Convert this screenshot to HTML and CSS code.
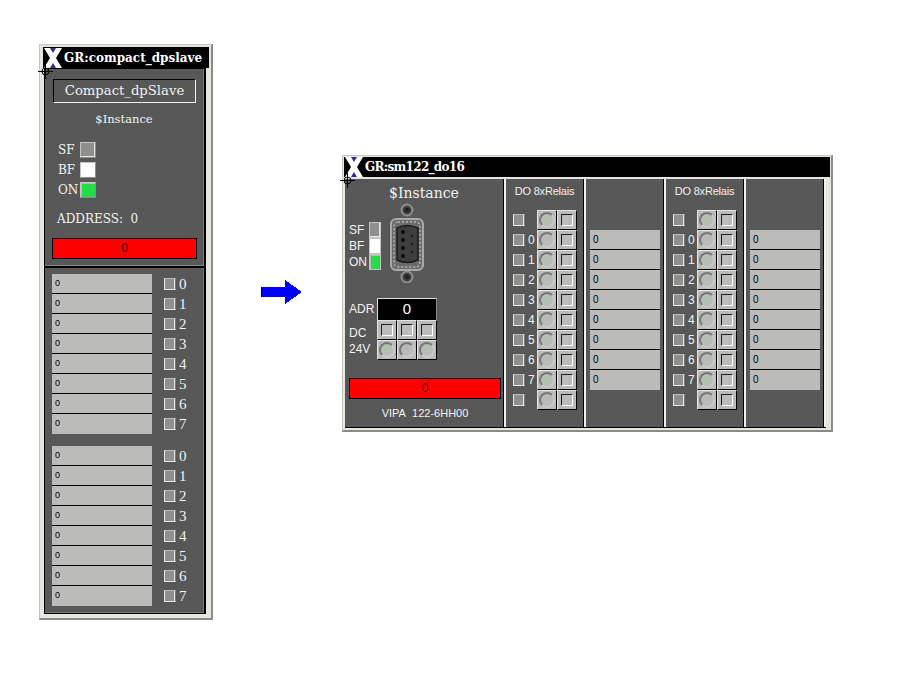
FILE: index.html
```html
<!DOCTYPE html>
<html>
<head>
    <meta charset="UTF-8">
    <title>Graphs</title>
    <link rel="stylesheet" href="styles.css">
</head>
<body>
    <div class="desktop">

        <!-- left window -->
        <div class="win slaveWin">
            <div class="titlebar">
                <svg class="xlogo" viewBox="0 0 18 20"><rect width="18" height="20" fill="#000"/><polygon points="3,0 16,0 9,9" fill="#3a2a8c"/><polygon points="3,20 16,20 9,11" fill="#3a2a8c"/><polygon points="0,0 6,0 18,20 12,20" fill="#fff"/><polygon points="12,0 18,0 6,20 0,20" fill="#fff"/></svg>
                <span class="titleText">GR:compact_dpslave</span>
            </div>
            <div class="slaveBody">
                <div class="pane slaveTop">
                    <div class="nameBox">Compact_dpSlave</div>
                    <div class="instance">$Instance</div>
                    <div class="ledRow"><span class="ledName">SF</span><span class="led ledGrey"></span></div>
                    <div class="ledRow"><span class="ledName">BF</span><span class="led ledWhite"></span></div>
                    <div class="ledRow"><span class="ledName">ON</span><span class="led ledGreen"></span></div>
                    <div class="address">ADDRESS:&nbsp; 0</div>
                    <div class="redBar">0</div>
                </div>
                <div class="pane slaveIo">
                    <div class="ioGroup">
                        <div class="ioRow"><div class="cell">0</div><span class="chk"></span><span class="digit">0</span></div>
                        <div class="ioRow"><div class="cell">0</div><span class="chk"></span><span class="digit">1</span></div>
                        <div class="ioRow"><div class="cell">0</div><span class="chk"></span><span class="digit">2</span></div>
                        <div class="ioRow"><div class="cell">0</div><span class="chk"></span><span class="digit">3</span></div>
                        <div class="ioRow"><div class="cell">0</div><span class="chk"></span><span class="digit">4</span></div>
                        <div class="ioRow"><div class="cell">0</div><span class="chk"></span><span class="digit">5</span></div>
                        <div class="ioRow"><div class="cell">0</div><span class="chk"></span><span class="digit">6</span></div>
                        <div class="ioRow"><div class="cell">0</div><span class="chk"></span><span class="digit">7</span></div>
                    </div>
                    <div class="ioGroup">
                        <div class="ioRow"><div class="cell">0</div><span class="chk"></span><span class="digit">0</span></div>
                        <div class="ioRow"><div class="cell">0</div><span class="chk"></span><span class="digit">1</span></div>
                        <div class="ioRow"><div class="cell">0</div><span class="chk"></span><span class="digit">2</span></div>
                        <div class="ioRow"><div class="cell">0</div><span class="chk"></span><span class="digit">3</span></div>
                        <div class="ioRow"><div class="cell">0</div><span class="chk"></span><span class="digit">4</span></div>
                        <div class="ioRow"><div class="cell">0</div><span class="chk"></span><span class="digit">5</span></div>
                        <div class="ioRow"><div class="cell">0</div><span class="chk"></span><span class="digit">6</span></div>
                        <div class="ioRow"><div class="cell">0</div><span class="chk"></span><span class="digit">7</span></div>
                    </div>
                </div>
            </div>
            <svg class="cross" viewBox="0 0 15 15"><circle cx="7.5" cy="7.5" r="3.5" fill="none" stroke="#000"/><path d="M0 7.5H15M7.5 0V15" stroke="#000" fill="none"/></svg>
        </div>

        <!-- arrow between the windows -->
        <svg class="arrow" viewBox="0 0 41 24" shape-rendering="crispEdges"><rect x="0" y="7" width="1" height="10" fill="#000"/><polygon points="1,7 24,7 24,0 41,12 24,24 24,17 1,17" fill="#00f"/></svg>

        <!-- right window -->
        <div class="win moduleWin">
            <div class="titlebar">
                <svg class="xlogo" viewBox="0 0 18 20"><rect width="18" height="20" fill="#000"/><polygon points="3,0 16,0 9,9" fill="#3a2a8c"/><polygon points="3,20 16,20 9,11" fill="#3a2a8c"/><polygon points="0,0 6,0 18,20 12,20" fill="#fff"/><polygon points="12,0 18,0 6,20 0,20" fill="#fff"/></svg>
                <span class="titleText">GR:sm122_do16</span>
            </div>
            <div class="moduleBody">
                <div class="pane moduleMain">
                    <div class="moduleInstance">$Instance</div>
                    <div class="statusArea">
                        <div class="ledCol">
                            <div class="tallRow"><span class="tallName">SF</span><span class="tallLed ledGrey"></span></div>
                            <div class="tallRow"><span class="tallName">BF</span><span class="tallLed ledWhite"></span></div>
                            <div class="tallRow"><span class="tallName">ON</span><span class="tallLed ledGreen"></span></div>
                        </div>
                        <svg class="connector" viewBox="0 0 36 80">
                            <circle cx="17" cy="7" r="5.5" fill="#444" stroke="#8e8e8a" stroke-width="2"/>
                            <circle cx="17" cy="7" r="2.5" fill="#222"/>
                            <circle cx="17" cy="74" r="5.5" fill="#444" stroke="#8e8e8a" stroke-width="2"/>
                            <circle cx="17" cy="74" r="2.5" fill="#222"/>
                            <rect x="1" y="16" width="32" height="51" rx="5" fill="#6c6c6a" stroke="#a8a8a4" stroke-width="2"/>
                            <rect x="4" y="19" width="26" height="45" rx="4" fill="none" stroke="#d8d8d4" stroke-dasharray="2 2"/>
                            <path d="M7 25Q17 20 28 25V57Q17 62 7 57Z" fill="#3e3e3e" stroke="#1c1c1c" stroke-width="1.5"/>
                            <circle cx="13" cy="29" r="2" fill="#0c0c0c"/><circle cx="13" cy="37" r="2" fill="#0c0c0c"/><circle cx="13" cy="45" r="2" fill="#0c0c0c"/><circle cx="13" cy="53" r="2" fill="#0c0c0c"/>
                            <circle cx="22" cy="33" r="1.5" fill="#1c1c1c"/><circle cx="22" cy="41" r="1.5" fill="#1c1c1c"/><circle cx="22" cy="49" r="1.5" fill="#1c1c1c"/>
                        </svg>
                    </div>
                    <div class="adrArea">
                        <div class="adrLabels">
                            <span class="adrName">ADR</span>
                            <span class="dcName">DC<br>24V</span>
                        </div>
                        <div class="adrBlock">
                            <div class="adrDisplay">0</div>
                            <div class="btnGrid">
                                <span class="btn"><i class="sq"></i></span><span class="btn"><i class="sq"></i></span><span class="btn"><i class="sq"></i></span>
                                <span class="btn"><i class="circ"></i></span><span class="btn"><i class="circ"></i></span><span class="btn"><i class="circ"></i></span>
                            </div>
                        </div>
                    </div>
                    <div class="redBar moduleRed">0</div>
                    <div class="vipa">VIPA&nbsp; 122-6HH00</div>
                </div>

                <div class="pane doCol">
                    <div class="doTitle">DO 8xRelais</div>
                    <div class="doRow"><span class="chk"></span><span class="doDigit"></span><span class="btn"><i class="circ"></i></span><span class="btn"><i class="sq"></i></span></div>
                    <div class="doRow"><span class="chk"></span><span class="doDigit">0</span><span class="btn"><i class="circ"></i></span><span class="btn"><i class="sq"></i></span></div>
                    <div class="doRow"><span class="chk"></span><span class="doDigit">1</span><span class="btn"><i class="circ"></i></span><span class="btn"><i class="sq"></i></span></div>
                    <div class="doRow"><span class="chk"></span><span class="doDigit">2</span><span class="btn"><i class="circ"></i></span><span class="btn"><i class="sq"></i></span></div>
                    <div class="doRow"><span class="chk"></span><span class="doDigit">3</span><span class="btn"><i class="circ"></i></span><span class="btn"><i class="sq"></i></span></div>
                    <div class="doRow"><span class="chk"></span><span class="doDigit">4</span><span class="btn"><i class="circ"></i></span><span class="btn"><i class="sq"></i></span></div>
                    <div class="doRow"><span class="chk"></span><span class="doDigit">5</span><span class="btn"><i class="circ"></i></span><span class="btn"><i class="sq"></i></span></div>
                    <div class="doRow"><span class="chk"></span><span class="doDigit">6</span><span class="btn"><i class="circ"></i></span><span class="btn"><i class="sq"></i></span></div>
                    <div class="doRow"><span class="chk"></span><span class="doDigit">7</span><span class="btn"><i class="circ"></i></span><span class="btn"><i class="sq"></i></span></div>
                    <div class="doRow"><span class="chk"></span><span class="doDigit"></span><span class="btn"><i class="circ"></i></span><span class="btn"><i class="sq"></i></span></div>
                </div>
                <div class="pane valCol">
                    <div class="valCell">0</div><div class="valCell">0</div><div class="valCell">0</div><div class="valCell">0</div>
                    <div class="valCell">0</div><div class="valCell">0</div><div class="valCell">0</div><div class="valCell">0</div>
                </div>

                <div class="pane doCol">
                    <div class="doTitle">DO 8xRelais</div>
                    <div class="doRow"><span class="chk"></span><span class="doDigit"></span><span class="btn"><i class="circ"></i></span><span class="btn"><i class="sq"></i></span></div>
                    <div class="doRow"><span class="chk"></span><span class="doDigit">0</span><span class="btn"><i class="circ"></i></span><span class="btn"><i class="sq"></i></span></div>
                    <div class="doRow"><span class="chk"></span><span class="doDigit">1</span><span class="btn"><i class="circ"></i></span><span class="btn"><i class="sq"></i></span></div>
                    <div class="doRow"><span class="chk"></span><span class="doDigit">2</span><span class="btn"><i class="circ"></i></span><span class="btn"><i class="sq"></i></span></div>
                    <div class="doRow"><span class="chk"></span><span class="doDigit">3</span><span class="btn"><i class="circ"></i></span><span class="btn"><i class="sq"></i></span></div>
                    <div class="doRow"><span class="chk"></span><span class="doDigit">4</span><span class="btn"><i class="circ"></i></span><span class="btn"><i class="sq"></i></span></div>
                    <div class="doRow"><span class="chk"></span><span class="doDigit">5</span><span class="btn"><i class="circ"></i></span><span class="btn"><i class="sq"></i></span></div>
                    <div class="doRow"><span class="chk"></span><span class="doDigit">6</span><span class="btn"><i class="circ"></i></span><span class="btn"><i class="sq"></i></span></div>
                    <div class="doRow"><span class="chk"></span><span class="doDigit">7</span><span class="btn"><i class="circ"></i></span><span class="btn"><i class="sq"></i></span></div>
                    <div class="doRow"><span class="chk"></span><span class="doDigit"></span><span class="btn"><i class="circ"></i></span><span class="btn"><i class="sq"></i></span></div>
                </div>
                <div class="pane valCol">
                    <div class="valCell">0</div><div class="valCell">0</div><div class="valCell">0</div><div class="valCell">0</div>
                    <div class="valCell">0</div><div class="valCell">0</div><div class="valCell">0</div><div class="valCell">0</div>
                </div>
            </div>
            <svg class="cross" viewBox="0 0 15 15"><circle cx="7.5" cy="7.5" r="3.5" fill="none" stroke="#000"/><path d="M0 7.5H15M7.5 0V15" stroke="#000" fill="none"/></svg>
        </div>

    </div>
</body>
</html>
```

FILE: styles.css
```css
html, body {
    margin: 0;
    padding: 0;
    width: 100%;
    height: 100%;
    background-color: #fff;
}

.desktop {
    position: relative;
    width: 900px;
    height: 700px;
    overflow: hidden;
    font-family: "Liberation Sans", sans-serif;
    color: #f2f2f2;
}

/* windows */
.win {
    position: absolute;
    box-sizing: border-box;
    background-color: #e6e6e0;
    border-top: 1px solid #c8c8ba;
    border-left: 1px solid #c8c8ba;
    border-right: 2px solid #8a8a86;
    border-bottom: 2px solid #8a8a86;
}

.slaveWin {
    left: 39px;
    top: 44px;
    width: 174px;
    height: 576px;
    padding: 2px 2px 0 3px;
}

.moduleWin {
    left: 342px;
    top: 155px;
    width: 491px;
    height: 277px;
    padding: 1px 1px 0 1px;
}

.titlebar {
    display: flex;
    align-items: center;
    height: 21px;
    background-color: #000;
    color: #fff;
    font-family: "DejaVu Serif", serif;
    font-weight: bold;
    font-size: 12px;
    white-space: nowrap;
}

.moduleWin .titlebar {
    height: 20px;
    letter-spacing: -0.7px;
}

.xlogo {
    width: 18px;
    height: 20px;
    margin-left: 1px;
    flex: none;
}

.titleText {
    margin-left: 2px;
}

.cross {
    position: absolute;
    width: 15px;
    height: 15px;
}

.slaveWin .cross {
    left: -2px;
    top: 19px;
}

.moduleWin .cross {
    left: -3px;
    top: 17px;
}

.arrow {
    position: absolute;
    left: 261px;
    top: 280px;
    width: 41px;
    height: 24px;
}

/* dithered dark panel */
.pane {
    box-sizing: border-box;
    background-color: #575757;
    background-image: repeating-conic-gradient(#555 0 25%, #5a5a5a 0 50%);
    background-size: 2px 2px;
}

/* left window */
.slaveBody {
    display: flex;
    flex-direction: column;
    width: 159px;
    height: 545px;
    margin-left: 1px;
    padding-left: 1px;
    background-color: #000;
    border-right: 2px solid #000;
    border-bottom: 1px solid #000;
}

.slaveTop {
    height: 197px;
    margin-top: 1px;
    padding: 10px 0 0 8px;
    border-bottom: 1px solid #8a8a8a;
    border-right: 1px solid #777;
    font-family: "DejaVu Serif", serif;
    font-size: 11.5px;
}

.nameBox {
    box-sizing: border-box;
    width: 143px;
    height: 24px;
    line-height: 21px;
    text-align: center;
    font-size: 13.2px;
    border-top: 1px solid #000;
    border-left: 1px solid #000;
    border-right: 1px solid #eee;
    border-bottom: 1px solid #eee;
}

.instance {
    width: 142px;
    margin-top: 9px;
    height: 15px;
    line-height: 15px;
    text-align: center;
}

.ledRow {
    display: flex;
    align-items: center;
    height: 20px;
    margin-left: 5px;
}

.instance + .ledRow {
    margin-top: 13px;
}

.ledName {
    width: 22px;
    font-size: 12px;
}

.led {
    box-sizing: border-box;
    width: 16px;
    height: 16px;
    border: 1px solid #c4c4c4;
    border-right-color: #8c8c8c;
    border-bottom-color: #8c8c8c;
}

.ledGrey {
    background-color: #8e908c;
    box-shadow: inset -1px -1px 0 #e6e6e6;
}

.ledWhite {
    background-color: #fff;
}

.ledGreen {
    background-color: #22dd44;
    box-shadow: inset 1px 1px 0 #bbb;
}

.address {
    margin: 12px 0 0 4px;
    height: 15px;
    line-height: 15px;
    font-size: 12px;
}

.redBar {
    box-sizing: border-box;
    width: 145px;
    height: 21px;
    margin: 11px 0 0 -1px;
    line-height: 19px;
    text-align: center;
    font-family: "Liberation Sans", sans-serif;
    font-size: 12px;
    color: #400;
    background-color: #f00;
    border: 1px solid #000;
}

.slaveIo {
    height: 345px;
    margin-top: 2px;
    padding: 6px 0 0 7px;
    border-right: 1px solid #777;
    border-bottom: 1px solid #777;
}

.ioGroup + .ioGroup {
    margin-top: 12px;
}

.ioRow {
    display: flex;
    align-items: center;
    height: 20px;
}

.cell {
    box-sizing: border-box;
    width: 100px;
    height: 20px;
    padding-left: 3px;
    margin-right: 12px;
    line-height: 19px;
    font-size: 9px;
    color: #000;
    background-color: #bbbcba;
    border-bottom: 1px solid #000;
}

.ioRow:last-child .cell {
    border-bottom: 0;
}

.chk {
    box-sizing: border-box;
    flex: none;
    width: 12px;
    height: 12px;
    background-color: #8e908c;
    border-top: 1px solid #bdbdbd;
    border-left: 1px solid #e8e8e8;
    border-right: 1px solid #777;
    border-bottom: 1px solid #e8e8e8;
    box-shadow: inset -1px 0 0 #e8e8e8;
}

.digit {
    margin-left: 3px;
    font-family: "Liberation Serif", serif;
    font-size: 15px;
}

/* right window */
.moduleBody {
    display: flex;
    width: 481px;
    height: 248px;
    margin: 2px 0 0 1px;
    background-color: #000;
    border-bottom: 1px solid #000;
}

.moduleMain {
    width: 161px;
    padding: 4px 0 0 4px;
    border-right: 2px solid #f0f0f0;
    box-shadow: inset -1px 0 0 #000;
}

.moduleInstance {
    width: 150px;
    height: 20px;
    line-height: 20px;
    text-align: center;
    font-family: "DejaVu Serif", serif;
    font-size: 14px;
}

.statusArea {
    display: flex;
    align-items: flex-start;
    height: 82px;
}

.ledCol {
    margin-top: 19px;
    width: 41px;
    flex: none;
}

.tallRow {
    display: flex;
    align-items: center;
    height: 16px;
}

.tallName {
    width: 20px;
    font-size: 12px;
}

.tallLed {
    box-sizing: border-box;
    width: 12px;
    height: 16px;
    border: 1px solid #c4c4c4;
}

.connector {
    width: 36px;
    height: 80px;
}

.adrArea {
    display: flex;
    margin-top: 13px;
}

.adrLabels {
    display: flex;
    flex-direction: column;
    width: 28px;
    font-size: 12px;
}

.adrName {
    height: 22px;
    line-height: 22px;
    margin-bottom: 5px;
}

.dcName {
    line-height: 16px;
}

.adrBlock {
    width: 60px;
}

.adrDisplay {
    box-sizing: border-box;
    height: 22px;
    line-height: 20px;
    text-align: center;
    font-size: 15px;
    color: #fff;
    background-color: #000;
    border-top: 1px solid #ddd;
    border-left: 1px solid #ddd;
    border-right: 1px solid #888;
}

.btnGrid {
    display: grid;
    grid-template-columns: repeat(3, 20px);
    grid-auto-rows: 20px;
}

.btn {
    box-sizing: border-box;
    display: flex;
    align-items: center;
    justify-content: center;
    flex: none;
    width: 20px;
    height: 20px;
    background-color: #bbbcba;
    border-top: 1px solid #e4e4e4;
    border-left: 1px solid #e4e4e4;
    border-right: 1px solid #000;
    border-bottom: 1px solid #000;
}

.sq {
    box-sizing: border-box;
    width: 12px;
    height: 12px;
    border-top: 1px solid #222;
    border-left: 1px solid #222;
    border-right: 1px solid #fff;
    border-bottom: 1px solid #fff;
}

.circ {
    box-sizing: border-box;
    width: 16px;
    height: 16px;
    border-radius: 50%;
    background-color: #b6bcb4;
    border: 2px solid #777;
    border-right-color: #c8c8c4;
    border-bottom-color: #c8c8c4;
}

.moduleRed {
    width: 152px;
    margin: 18px 0 0 0;
}

.vipa {
    width: 152px;
    margin-top: 6px;
    height: 16px;
    line-height: 16px;
    text-align: center;
    font-size: 11px;
}

.doCol {
    width: 80px;
    padding: 4px 0 0 7px;
    border-right: 2px solid #f0f0f0;
    box-shadow: inset -1px 0 0 #000;
}

.doTitle {
    width: 63px;
    height: 16px;
    line-height: 16px;
    margin-bottom: 11px;
    text-align: center;
    font-size: 11px;
    letter-spacing: -0.2px;
    white-space: nowrap;
}

.doRow {
    display: flex;
    align-items: center;
    height: 20px;
}

.doDigit {
    width: 12px;
    padding-left: 3px;
    box-sizing: border-box;
    font-size: 12px;
}

.valCol {
    width: 80px;
    padding: 51px 0 0 4px;
    border-right: 2px solid #f0f0f0;
    box-shadow: inset -1px 0 0 #000;
}

.valCell {
    box-sizing: border-box;
    width: 70px;
    height: 20px;
    padding-left: 3px;
    line-height: 19px;
    font-size: 10px;
    color: #000;
    background-color: #bbbcba;
    border-bottom: 1px solid #000;
}

.valCell:last-child {
    border-bottom: 0;
}
```
